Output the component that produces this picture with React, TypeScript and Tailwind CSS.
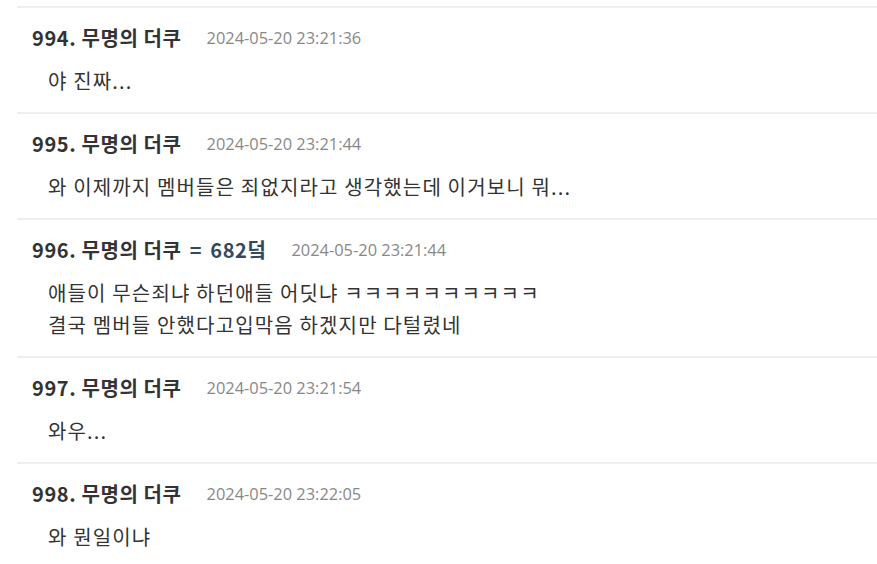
type Post = {
  no: number;
  name: string;
  tag?: string;
  date: string;
  lines: string[];
};

const posts: Post[] = [
  { no: 994, name: "무명의 더쿠", date: "2024-05-20 23:21:36", lines: ["야 진짜..."] },
  {
    no: 995,
    name: "무명의 더쿠",
    date: "2024-05-20 23:21:44",
    lines: ["와 이제까지 멤버들은 죄없지라고 생각했는데 이거보니 뭐..."],
  },
  {
    no: 996,
    name: "무명의 더쿠",
    tag: "682덬",
    date: "2024-05-20 23:21:44",
    lines: [
      "애들이 무슨죄냐 하던애들 어딧냐 ㅋㅋㅋㅋㅋㅋㅋㅋㅋㅋ",
      "결국 멤버들 안했다고입막음 하겠지만 다털렸네",
    ],
  },
  { no: 997, name: "무명의 더쿠", date: "2024-05-20 23:21:54", lines: ["와우..."] },
  { no: 998, name: "무명의 더쿠", date: "2024-05-20 23:22:05", lines: ["와 뭔일이냐"] },
];

export default function App() {
  return (
    <main className="min-h-screen bg-white pt-[6px] pl-[17px] font-['Noto_Sans_CJK_KR',sans-serif] text-[#333]">
      <ul>
        {posts.map((p) => (
          <li key={p.no} className="border-t-2 border-[#eeeeee] px-[15px] pt-[16px] pb-[15px]">
            <div className="flex h-[28px] items-center">
              <span className="text-[20px] font-bold tracking-[0.6px] text-[#333]">
                {p.no}. {p.name}
                {p.tag && (
                  <span className="text-[#34495e]">
                    {" "}
                    <span className="mx-[3px]">=</span> {p.tag}
                  </span>
                )}
              </span>
              <span className="ml-[25px] font-['Open_Sans','Noto_Sans_CJK_KR',sans-serif] text-[16.4px] text-[#888]">
                {p.date}
              </span>
            </div>
            <div className="mt-[13px] pl-[16px] text-[20px] leading-[32px] tracking-[1.15px] text-[#333]">
              {p.lines.map((l, i) => (
                <p key={i}>{l}</p>
              ))}
            </div>
          </li>
        ))}
      </ul>
    </main>
  );
}
